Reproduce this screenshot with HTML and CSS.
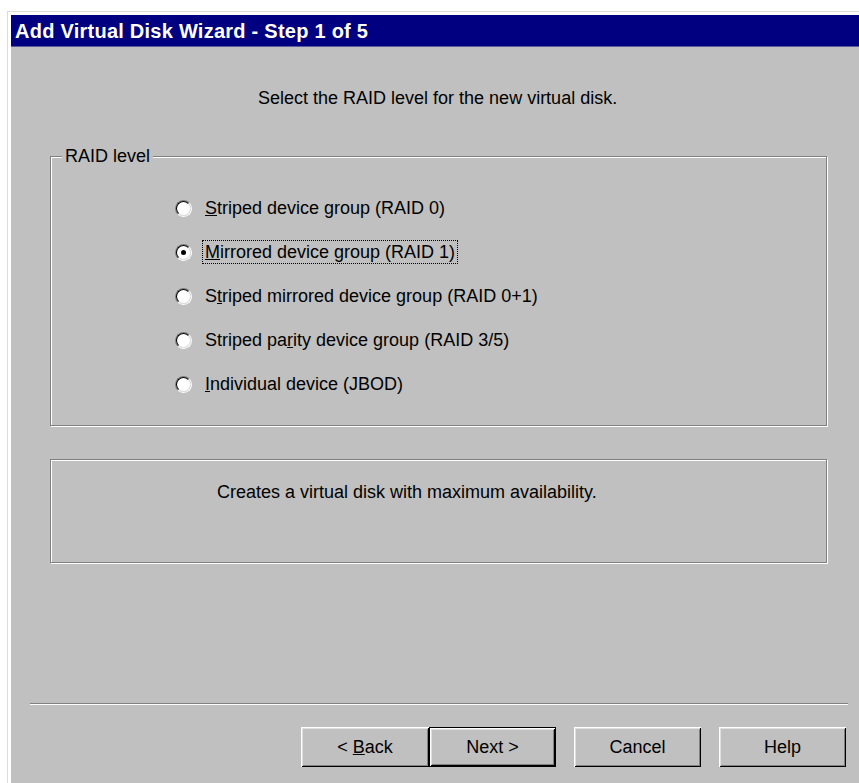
FILE: index.html
```html
<!DOCTYPE html>
<html lang="en">
<head>
<meta charset="utf-8">
<title>Add Virtual Disk Wizard</title>
<link rel="stylesheet" href="styles.css">
</head>
<body>
<div class="window">
  <div class="frame">
    <div class="title-bar">Add Virtual Disk Wizard - Step 1 of 5</div>
    <div class="client">
      <p class="prompt">Select the RAID level for the new virtual disk.</p>

      <div class="group">
        <span class="group-label">RAID level</span>
        <div class="radio-list">
          <label class="radio-row">
            <span class="radio"></span>
            <span class="radio-text"><u>S</u>triped device group (RAID 0)</span>
          </label>
          <label class="radio-row">
            <span class="radio checked"></span>
            <span class="radio-text focused"><u>M</u>irrored device group (RAID 1)</span>
          </label>
          <label class="radio-row">
            <span class="radio"></span>
            <span class="radio-text">S<u>t</u>riped mirrored device group (RAID 0+1)</span>
          </label>
          <label class="radio-row">
            <span class="radio"></span>
            <span class="radio-text">Striped pa<u>r</u>ity device group (RAID 3/5)</span>
          </label>
          <label class="radio-row">
            <span class="radio"></span>
            <span class="radio-text"><u>I</u>ndividual device (JBOD)</span>
          </label>
        </div>
      </div>

      <div class="description">
        <p class="description-text">Creates a virtual disk with maximum availability.</p>
      </div>

      <div class="separator"></div>

      <div class="button-row">
        <button class="btn">&lt; <u>B</u>ack</button>
        <button class="btn default">Next &gt;</button>
        <button class="btn spaced">Cancel</button>
        <button class="btn spaced">Help</button>
      </div>
    </div>
  </div>
</div>
</body>
</html>
```

FILE: styles.css
```css
* {
  box-sizing: border-box;
}

html, body {
  margin: 0;
  padding: 0;
  background: #ffffff;
  overflow: hidden;
}

body {
  font-family: "Liberation Sans", Arial, sans-serif;
  font-size: 18px;
  color: #000000;
}

/* outer window edge: light grey line then white bevel */
.window {
  margin: 11px 0 0 7px;
  border-top: 1px solid #dcdcdc;
  border-left: 1px solid #dcdcdc;
}

.frame {
  border-top: 3px solid #ffffff;
  border-left: 3px solid #ffffff;
  display: flex;
  flex-direction: column;
  height: 771px;
}

.title-bar {
  height: 32px;
  background: #000080;
  color: #ffffff;
  font-weight: bold;
  font-size: 20px;
  letter-spacing: 0.25px;
  line-height: 32px;
  padding-left: 4px;
  border-bottom: 1px solid #5a5aa0;
  white-space: nowrap;
}

.client {
  flex: 1;
  background: #c0c0c0;
  display: flex;
  flex-direction: column;
}

.prompt {
  margin: 41px 0 0 247px;
  height: 20px;
  line-height: 20px;
  white-space: nowrap;
}

/* etched group frame */
.group {
  position: relative;
  margin: 48px 0 0 39px;
  width: 777px;
  height: 270px;
  border: 1px solid #808080;
  box-shadow: inset 1px 1px 0 #ffffff, 1px 1px 0 #ffffff;
}

.group-label {
  position: absolute;
  left: 11px;
  top: -11px;
  padding: 0 3px;
  background: #c0c0c0;
  line-height: 20px;
}

.radio-list {
  display: flex;
  flex-direction: column;
  padding: 29px 0 0 124px;
}

.radio-row {
  display: flex;
  align-items: center;
  height: 44px;
  gap: 10px;
}

/* round option button with a split bevel */
.radio {
  position: relative;
  width: 17px;
  height: 17px;
  border-radius: 50%;
  border: 1px solid;
  border-color: #808080 #ffffff #ffffff #808080;
  flex: none;
}

.radio::before {
  content: "";
  position: absolute;
  inset: 0;
  border-radius: 50%;
  border: 1px solid;
  border-color: #000000 #dfdfdf #dfdfdf #000000;
  background: #ffffff;
}

.radio.checked::after {
  content: "";
  position: absolute;
  left: 5px;
  top: 5px;
  width: 5px;
  height: 5px;
  border-radius: 50%;
  background: #000000;
}

.radio-text {
  line-height: 20px;
  padding: 1px 2px;
  border: 1px solid transparent;
  white-space: nowrap;
}

.radio-text.focused {
  border: 1px dotted #000000;
}

.description {
  margin: 33px 0 0 39px;
  width: 777px;
  height: 104px;
  border: 1px solid #808080;
  box-shadow: inset 1px 1px 0 #ffffff, 1px 1px 0 #ffffff;
}

.description-text {
  margin: 22px 0 0 166px;
  line-height: 20px;
  white-space: nowrap;
}

.separator {
  margin: 140px 0 0 19px;
  width: 818px;
  height: 2px;
  border-top: 1px solid #808080;
  border-bottom: 1px solid #ffffff;
}

.button-row {
  display: flex;
  margin: 22px 0 0 290px;
}

/* raised push buttons */
.btn {
  width: 128px;
  height: 40px;
  font-family: inherit;
  font-size: 18px;
  color: #000000;
  background: #c0c0c0;
  border: none;
  padding: 0;
  box-shadow:
    inset 1px 1px 0 #ffffff,
    inset -1px -1px 0 #000000,
    inset 2px 2px 0 #dfdfdf,
    inset -2px -2px 0 #808080;
}

.btn.default {
  width: 127px;
  border: 1px solid #000000;
}

.btn.spaced {
  margin-left: 18px;
  width: 127px;
}
```
